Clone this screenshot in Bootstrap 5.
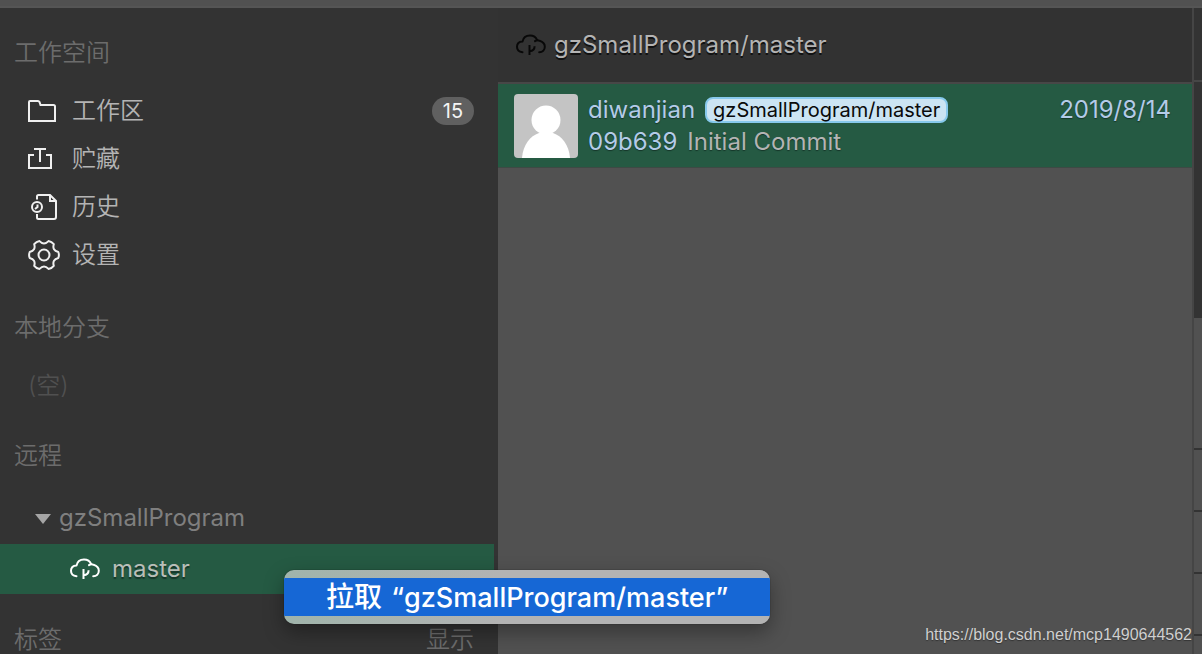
<!DOCTYPE html>
<html lang="zh-CN">
<head>
<meta charset="utf-8">
<meta name="viewport" content="width=device-width, initial-scale=1">
<title>gzSmallProgram</title>
<link href="https://cdn.jsdelivr.net/npm/bootstrap@5.3.0/dist/css/bootstrap.min.css" rel="stylesheet">
<style>
  body { background: #333; color: #b4b4b4; font-family: Inter, "Noto Sans CJK SC", sans-serif; font-size: 24px; line-height: 32px; }
  a { text-decoration: none; color: inherit; }
  svg { display: block; flex: none; fill: none; }
  .window-strip { height: 8px; background: #515151; border-bottom: 2px solid #555; flex: none; }
  .source-list { width: 498px; flex: none; padding-right: 4px; z-index: 2; }
  .group-title { font-size: 24px; line-height: 32px; color: #6c6c6c; font-weight: 350; padding: 0 20px 0 14px; margin: 38px 0 0; }
  .group-title.first { margin: 29px 0 18px; }
  .group-title.local { margin-top: 33px; }
  .group-title.tags { margin-top: 30px; }
  .entry { height: 48px; padding: 0 20px 0 28px; color: #b4b4b4; font-weight: 350; }
  .entry svg { color: #f0f0f0; }
  .count { min-width: 42px; height: 28px; line-height: 28px; font-size: 20px; font-weight: 400; background: #606060; color: #f4f4f4; }
  .empty-note { margin-top: 26px; padding-left: 28px; color: #505050; font-weight: 350; }
  .remote-name { margin: 30px 0 10px; padding-left: 35px; color: #7f7f7f; }
  .current { height: 50px; padding-left: 70px; background: #255a43; color: #b9beb8; text-shadow: 0 2px 1px #153629; gap: 12px; }
  .current svg { color: #fff; }
  .context-menu { left: 284px; top: 26px; width: 486px; padding: 8px 0; border-radius: 10px; background: linear-gradient(90deg, #a0b4ab, #b3b3b3 45%); box-shadow: 0 0 1px #111, 0 8px 20px rgba(0,0,0,.35); overflow: hidden; }
  .context-menu button { height: 38px; padding: 0 0 0 42px; background: #1667d5; color: #fff; font-size: 27px; line-height: 36px; font-weight: 500; }
  .context-menu .verb { font-size: 28px; margin-right: 2px; }
  .branch-bar { height: 76px; padding: 0 18px; border-bottom: 2px solid #474747; background: #323232; text-shadow: 0 2px 0 #111; }
  .branch-bar svg { color: #080808; }
  .history { background: #515151; min-width: 0; }
  .commit { height: 84px; padding: 10px 21px 0 16px; gap: 10px; background: #255a43; border-bottom: 1px solid #3d4a44; text-shadow: 0 1px 1px #153629; }
  .commit-line { gap: 10px; }
  .pale { color: #b4cbe8; }
  .ref-tag { height: 26px; line-height: 22px; padding: 0 6px; border: 2px solid #87c9ec; border-radius: 8px; background: #cbe4f3; color: #0a0a0a; font-size: 20px; text-shadow: none; }
  .side-strip { width: 10px; flex: none; border-left: 2px solid #454545; background: #515151; }
  .strip-head { height: 74px; background: #333; border-bottom: 2px solid #474747; }
  .strip-body { height: 236px; background: #333; }
  .strip-row { height: 62px; border-bottom: 2px solid #333; }
  .strip-row.tall { height: 132px; }
  .site-mark { right: 10px; bottom: 8px; font: 400 16px/22px "Liberation Sans", sans-serif; color: #d0d0d0; text-shadow: 0 1px 1px #333; z-index: 1; }
</style>
</head>
<body>
<svg width="0" height="0" class="position-absolute" aria-hidden="true">
  <symbol id="cloud" viewBox="0 0 30 22">
    <g fill="none" stroke="currentColor" stroke-width="2" stroke-linecap="round" stroke-linejoin="round">
      <path d="M6.500 18.200C3.200 18 1 16 1 12.800c0-2.900 2.200-5 5.500-5.200C7.200 3.800 10.200 1.500 14 1.500c3.600 0 6 1.700 7.200 4.600"/>
      <path d="M19 7.200c1.500-1 3.200-1 4.600-.4 3.200 1 5.200 3.200 5.200 6 0 3.300-2.300 5.400-5.600 5.400"/>
      <path d="M13.500 11v10M18.600 12.300c0 3-1.600 4.700-5 4.900" stroke-linecap="butt"/>
    </g>
  </symbol>
</svg>
<div class="vh-100 d-flex flex-column overflow-hidden">
  <div class="window-strip"></div>
  <div class="d-flex flex-grow-1">
    <nav class="source-list position-relative d-flex flex-column">
      <h2 class="group-title first">工作空间</h2>
      <a href="#" class="entry d-flex align-items-center">
        <svg width="44" height="24" stroke="currentColor" stroke-width="2"><path d="M1 22V3q0-1 1-1h8q1 0 1.500 1l1 3h13q1.500 0 1.500 1.500V22z"/></svg>
        <span>工作区</span><span class="count rounded-pill text-center ms-auto">15</span>
      </a>
      <a href="#" class="entry d-flex align-items-center">
        <svg width="44" height="24" stroke="currentColor" stroke-width="2"><path d="M6 8H1v13h22V8h-5M12 15V2M6 2h12"/></svg>
        <span>贮藏</span>
      </a>
      <a href="#" class="entry d-flex align-items-center">
        <svg width="44" height="28" stroke="currentColor" stroke-width="2"><path d="M9 6.500V3.500Q9 2 10.500 2H22l6 6v16q0 2-2 2H10.500Q9 26 9 24.500V21"/><path d="M22 2v6h6"/><circle cx="9" cy="14" r="5"/><path d="M9.500 11.500V14L7 16"/></svg>
        <span>历史</span>
      </a>
      <a href="#" class="entry d-flex align-items-center">
        <svg width="44" height="30" stroke="currentColor" stroke-width="2" stroke-linejoin="round"><path d="M30.300 12Q31.500 15 30.300 18Q23.900 19.500 25.800 25.800Q23.700 28.400 20.500 28.900Q16 24.100 11.500 28.900Q8.300 28.400 6.200 25.800Q8.100 19.500 1.700 18Q.5 15 1.700 12Q8.100 10.500 6.200 4.200Q8.300 1.600 11.500 1.100Q16 5.900 20.500 1.100Q23.700 1.600 25.800 4.200Q23.900 10.500 30.300 12z"/><circle cx="16" cy="15" r="5.500"/></svg>
        <span>设置</span>
      </a>
      <h2 class="group-title local">本地分支</h2>
      <div class="empty-note">(空)</div>
      <h2 class="group-title">远程</h2>
      <a href="#" class="remote-name d-flex align-items-center gap-2">
        <svg width="16" height="12"><path d="M0 2h16L8 12z" fill="#a5a5a5"/></svg><span>gzSmallProgram</span>
      </a>
      <div class="position-relative">
        <a href="#" class="current d-flex align-items-center"><svg width="30" height="22"><use href="#cloud"/></svg><span>master</span></a>
        <div class="context-menu position-absolute" role="menu"><button type="button" role="menuitem" class="border-0 w-100 text-start d-block text-nowrap"><span class="verb">拉取</span> “gzSmallProgram/master”</button></div>
      </div>
      <div class="group-title tags d-flex justify-content-between"><span>标签</span><a href="#">显示</a></div>
    </nav>
    <main class="history flex-grow-1">
      <header class="branch-bar d-flex align-items-center"><svg width="30" height="22" class="me-2"><use href="#cloud"/></svg><span>gzSmallProgram/master</span></header>
      <article class="commit d-flex">
        <svg width="64" height="64" class="rounded-1"><path fill="#c4c4c4" d="M0 0h64v64H0z"/><circle cx="32" cy="26" r="14.500" fill="#fff"/><path d="M8 64c1-13 8-22 17-25h14c9 3 16 12 17 25z" fill="#fff"/></svg>
        <div class="flex-grow-1 text-nowrap">
          <div class="commit-line d-flex align-items-center"><span class="pale">diwanjian</span><span class="ref-tag">gzSmallProgram/master</span><time class="pale ms-auto">2019/8/14</time></div>
          <div class="commit-line d-flex"><a href="#" class="pale">09b639</a><span>Initial Commit</span></div>
        </div>
      </article>
    </main>
    <aside class="side-strip">
      <div class="strip-head"></div>
      <div class="strip-body"></div>
      <div class="strip-row tall"></div>
      <div class="strip-row"></div>
      <div class="strip-row"></div>
      <div class="strip-row"></div>
    </aside>
  </div>
</div>
<a href="#" class="site-mark position-absolute">https://blog.csdn.net/mcp1490644562</a>
<script src="https://cdn.jsdelivr.net/npm/bootstrap@5.3.0/dist/js/bootstrap.bundle.min.js"></script>
</body>
</html>
